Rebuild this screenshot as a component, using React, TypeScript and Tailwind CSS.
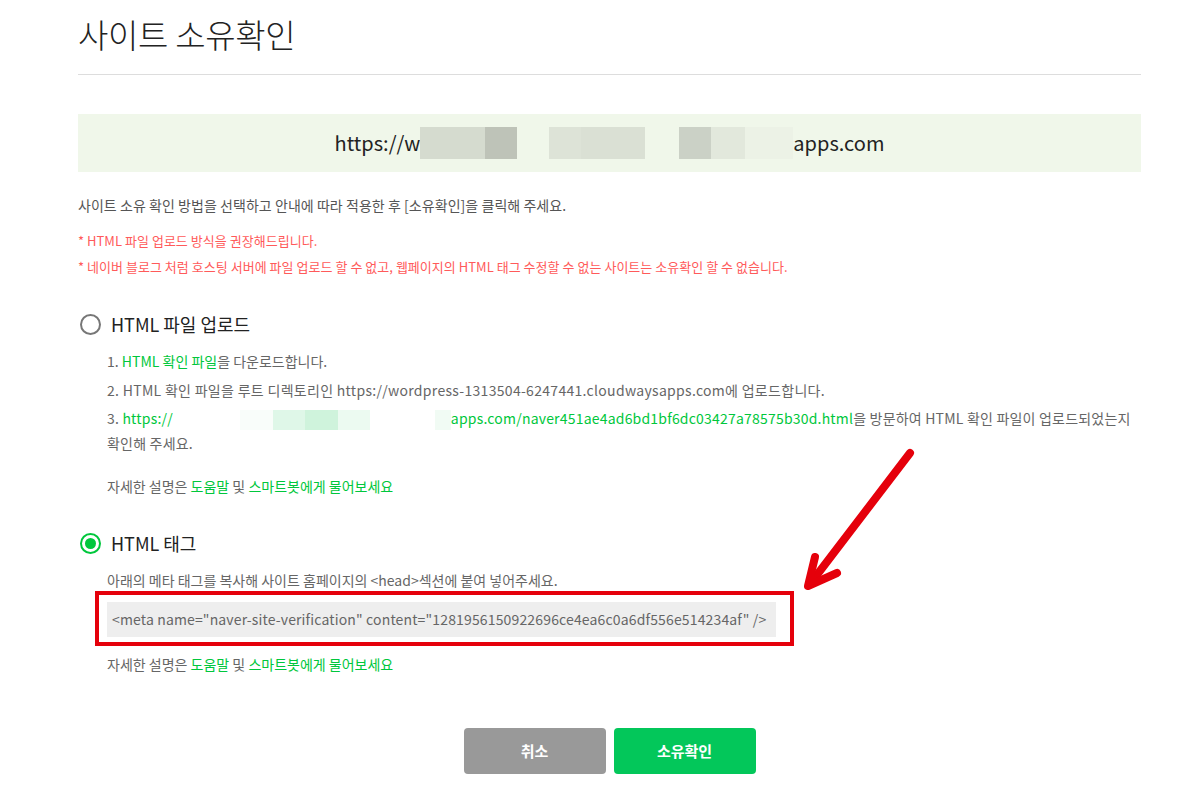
import React from "react";

const font = { fontFamily: '"Noto Sans CJK KR", "Noto Sans", sans-serif' };

function Blocks({ items, h }: { items: [number, string][]; h: string }) {
  return (
    <span className="inline-flex align-middle">
      {items.map(([w, c], i) => (
        <span key={i} className={h} style={{ width: w, backgroundColor: c, display: "inline-block" }} />
      ))}
    </span>
  );
}

function Help() {
  return (
    <p className="text-[14px] leading-[20px] text-[#666]">
      자세한 설명은 <span className="text-[#00c73c]">도움말</span> 및{" "}
      <span className="text-[#00c73c]">스마트봇에게 물어보세요</span>
    </p>
  );
}

export default function App() {
  return (
    <div className="relative min-h-[807px] w-[1204px] bg-white" style={font}>
      <div className="pl-[78px] pr-[63px]">
        <div className="h-[75px] border-b border-[#dddddd] pt-[14px]">
          <h1 className="text-[33px] font-light leading-[40px] tracking-[-0.3px] text-[#222]">사이트 소유확인</h1>
        </div>

        <div className="mt-[39px] flex h-[58px] items-center justify-center bg-[#f0f7ea] text-[20px] text-[#222]">
          <span className="flex items-center">
            <span>https://w</span>
            <Blocks
              h="h-[32px]"
              items={[
                [65, "#d5dbcf"],
                [32, "#bec3b8"],
                [32, "#f0f7ea"],
                [32, "#dde3d7"],
                [64, "#dae0d4"],
                [34, "#f0f7ea"],
                [32, "#cbd1c6"],
                [34, "#e2e8dc"],
                [48, "#ecf2e6"],
              ]}
            />
            <span>apps.com</span>
          </span>
        </div>

        <p className="mt-[23px] text-[14px] leading-[20px] tracking-[0.05px] text-[#555]">
          사이트 소유 확인 방법을 선택하고 안내에 따라 적용한 후 [소유확인]을 클릭해 주세요.
        </p>
        <div className="mt-[13px] text-[13px] leading-[26px] tracking-[0.03px] text-[#ff5a5a]">
          <p>* HTML 파일 업로드 방식을 권장해드립니다.</p>
          <p>* 네이버 블로그 처럼 호스팅 서버에 파일 업로드 할 수 없고, 웹페이지의 HTML 태그 수정할 수 없는 사이트는 소유확인 할 수 없습니다.</p>
        </div>

        <div className="mt-[29px] flex h-[30px] items-center">
          <span className="ml-[2px] h-[21px] w-[21px] rounded-full border-2 border-[#777]" />
          <span className="ml-[10px] text-[18px] text-[#222]">HTML 파일 업로드</span>
        </div>

        <div className="ml-[29px] mt-[10px] text-[14px] leading-[25px] text-[#666]">
          <p>
            1. <span className="text-[#00c73c]">HTML 확인 파일</span>을 다운로드합니다.
          </p>
          <p className="mt-[4px] tracking-[0.3px]">
            2. HTML 확인 파일을 루트 디렉토리인 https://wordpress-1313504-6247441.cloudwaysapps.com에 업로드합니다.
          </p>
          <p className="mt-[3px] tracking-[0.2px]">
            3. <span className="text-[#00c73c]">https://</span>
            <Blocks
              h="h-[20px]"
              items={[
                [67, "#ffffff"],
                [33, "#f9fdfa"],
                [32, "#dff7e8"],
                [33, "#cff3dc"],
                [32, "#ecfaf1"],
                [65, "#ffffff"],
                [16, "#f1fbf4"],
              ]}
            />
            <span className="text-[#00c73c]">apps.com/naver451ae4ad6bd1bf6dc03427a78575b30d.html</span>을 방문하여 HTML 확인 파일이 업로드되었는지
            <br />
            확인해 주세요.
          </p>
          <div className="mt-[20px]">
            <Help />
          </div>
        </div>

        <div className="mt-[32px] flex h-[30px] items-center">
          <span className="ml-[2px] flex h-[21px] w-[21px] items-center justify-center rounded-full border-2 border-[#00c73c]">
            <span className="h-[11px] w-[11px] rounded-full bg-[#00c73c]" />
          </span>
          <span className="ml-[10px] text-[18px] text-[#222]">HTML 태그</span>
        </div>

        <div className="ml-[29px] mt-[12px]">
          <p className="text-[14px] leading-[20px] text-[#666]">
            아래의 메타 태그를 복사해 사이트 홈페이지의 &lt;head&gt;섹션에 붙여 넣어주세요.
          </p>
          <div className="relative mt-[12px] w-[669px]">
            <div className="flex h-[35px] items-center bg-[#eeeeee] px-[5px] text-[14px] tracking-[0.15px] text-[#666]">
              &lt;meta name="naver-site-verification" content="1281956150922696ce4ea6c0a6df556e514234af" /&gt;
            </div>
            <div className="pointer-events-none absolute -bottom-[9px] -left-[12px] -right-[18px] -top-[11px] border-4 border-[#e5000b]" />
          </div>
          <div className="mt-[17px]">
            <Help />
          </div>
        </div>

        <div className="mt-[54px] flex justify-center gap-[8px]">
          <button className="h-[46px] w-[142px] rounded-[4px] bg-[#999999] text-[15px] font-bold text-white">취소</button>
          <button className="h-[46px] w-[142px] rounded-[4px] bg-[#03c75a] text-[15px] font-bold text-white">소유확인</button>
        </div>
      </div>

      <svg className="pointer-events-none absolute left-0 top-0" width="1204" height="807">
        <g stroke="#e5000b" strokeWidth="8" strokeLinecap="round" strokeLinejoin="round" fill="none">
          <line x1="910" y1="453" x2="810" y2="584" />
          <polyline points="815,557 808,586 837,573" />
        </g>
      </svg>
    </div>
  );
}
